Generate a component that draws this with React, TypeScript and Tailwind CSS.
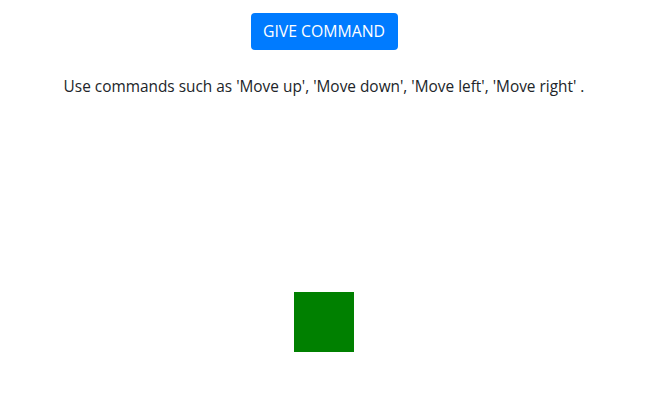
export default function App() {
  return (
    <div className="w-[648px] flex flex-col items-center text-[#212529]" style={{ fontFamily: '"Open Sans", sans-serif' }}>
      <button className="mt-[13px] h-[37px] w-[147px] rounded-[4px] bg-[#007bff] text-white text-[15.8px] leading-none">GIVE COMMAND</button>
      <p className="mt-[25px] text-[15.4px] leading-[24px] whitespace-nowrap">Use commands such as 'Move up', 'Move down', 'Move left', 'Move right' .</p>
      <div className="mt-[193px] w-[60px] h-[60px] bg-[#008000]" />
    </div>
  );
}
